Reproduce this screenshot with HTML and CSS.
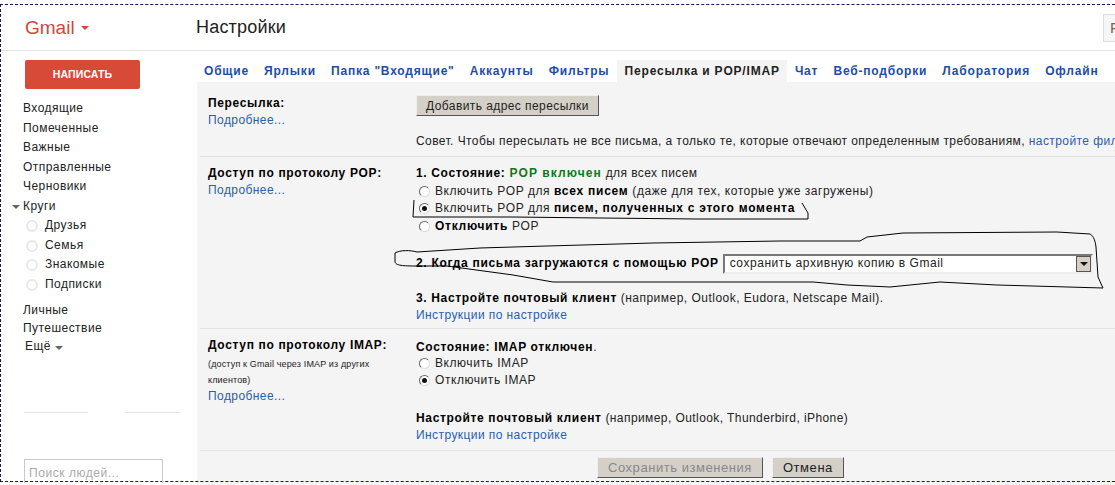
FILE: index.html
```html
<!DOCTYPE html>
<html lang="ru">
<head>
<meta charset="utf-8">
<title>Gmail — Настройки</title>
<link rel="stylesheet" href="styles.css">
</head>
<body>
<div class="frame">
  <header class="top">
    <div class="brand">Gmail <span class="caret caret-red"></span></div>
    <h1 class="title">Настройки</h1>
    <div class="search-stub">F</div>
  </header>
  <div class="body">
    <aside class="side">
      <div class="compose">НАПИСАТЬ</div>
      <nav class="nav">
        <div class="nav-item">Входящие</div>
        <div class="nav-item">Помеченные</div>
        <div class="nav-item">Важные</div>
        <div class="nav-item">Отправленные</div>
        <div class="nav-item">Черновики</div>
        <div class="nav-item nav-circles"><span class="caret caret-grey caret-left"></span>Круги</div>
        <div class="nav-item nav-sub"><span class="dot"></span>Друзья</div>
        <div class="nav-item nav-sub"><span class="dot"></span>Семья</div>
        <div class="nav-item nav-sub"><span class="dot"></span>Знакомые</div>
        <div class="nav-item nav-sub"><span class="dot"></span>Подписки</div>
        <div class="nav-item nav-gap">Личные</div>
        <div class="nav-item nav-tight">Путешествие</div>
        <div class="nav-item nav-more">Ещё <span class="caret caret-grey"></span></div>
      </nav>
      <div class="rules"><span class="rule"></span><span class="rule rule-short"></span></div>
      <div class="people">Поиск людей...</div>
    </aside>
    <main class="main">
      <div class="tabs">
        <a class="tab">Общие</a>
        <a class="tab">Ярлыки</a>
        <a class="tab">Папка "Входящие"</a>
        <a class="tab">Аккаунты</a>
        <a class="tab">Фильтры</a>
        <a class="tab tab-active">Пересылка и POP/IMAP</a>
        <a class="tab">Чат</a>
        <a class="tab">Веб-подборки</a>
        <a class="tab">Лаборатория</a>
        <a class="tab">Офлайн</a>
      </div>
      <div class="panel">
        <section class="row row-fwd">
          <div class="label"><b>Пересылка:</b><br><a class="link">Подробнее...</a></div>
          <div class="value">
            <button class="btn btn-add">Добавить адрес пересылки</button>
            <div class="tip">Совет. Чтобы пересылать не все письма, а только те, которые отвечают определенным требованиям, <a class="link">настройте фильтр</a></div>
          </div>
        </section>
        <section class="row row-pop">
          <div class="label"><b>Доступ по протоколу POP:</b><br><a class="link">Подробнее...</a></div>
          <div class="value">
            <div class="line"><b>1. Состояние: <span class="on">POP включен</span></b> для всех писем</div>
            <div class="line opt"><span class="radio"></span>Включить POP для <b>всех писем</b> (даже для тех, которые уже загружены)</div>
            <div class="line opt"><span class="radio radio-on"></span>Включить POP для <b>писем, полученных с этого момента</b></div>
            <div class="line opt"><span class="radio"></span><b>Отключить</b> POP</div>
            <div class="line when"><b>2. Когда письма загружаются с помощью POP</b>
              <span class="select"><span class="select-text">сохранить архивную копию в Gmail</span><span class="select-arrow"></span></span>
            </div>
            <div class="line client"><b>3. Настройте почтовый клиент</b> (например, Outlook, Eudora, Netscape Mail).</div>
            <div class="line"><a class="link">Инструкции по настройке</a></div>
          </div>
        </section>
        <section class="row row-imap">
          <div class="label"><b>Доступ по протоколу IMAP:</b>
            <div class="small">(доступ к Gmail через IMAP из других клиентов)</div>
            <a class="link">Подробнее...</a></div>
          <div class="value">
            <div class="line imap-state"><b>Состояние: IMAP отключен</b>.</div>
            <div class="line opt"><span class="radio"></span>Включить IMAP</div>
            <div class="line opt"><span class="radio radio-on"></span>Отключить IMAP</div>
            <div class="line client2"><b>Настройте почтовый клиент</b> (например, Outlook, Thunderbird, iPhone)</div>
            <div class="line"><a class="link">Инструкции по настройке</a></div>
          </div>
        </section>
        <div class="actions">
          <button class="btn btn-big btn-disabled">Сохранить изменения</button>
          <button class="btn btn-big">Отмена</button>
        </div>
      </div>
    </main>
  </div>
  <svg class="ink" width="1115" height="485" viewBox="0 0 1115 485" fill="none" stroke="#000" stroke-width="1">
    <path d="M414 200 L413 217 L513 217 L600 218 L697 219 L808 219 L808 213 L802 203"/>
    <path d="M1103 288 L1098 277 L1096 247 C1095 238 1092 235 1090 234 L1057 232 L903 233 L867 237 L860 241 L780 241 L653 243 L547 246 L480 248 L417 252 C410 250 400 250 395 253 L395 262 C396 265 400 266 415 266 L447 266 L513 275 L553 282 L780 282 L813 282 L847 285 L890 287 L940 282 L997 285 L1103 288"/>
  </svg>
</div>
</body>
</html>
```

FILE: styles.css
```css
* { box-sizing: border-box; }
html, body { margin: 0; padding: 0; background: #fff; }
body { font-family: "Liberation Sans", Arial, sans-serif; font-size: 12px; color: #222; }
.frame { position: relative; width: 1115px; height: 485px; overflow: hidden; background: #fff; padding-top: 5px; }
.frame::before { content: ""; position: absolute; left: 0; right: 0; top: 4px; bottom: 3px; border-top: 1px dashed #1a1a50; border-bottom: 1px dashed #1a1a50; border-left: 1px dashed #1a1a50; pointer-events: none; }
.top { height: 46px; display: flex; align-items: center; border-bottom: 1px solid #e5e5e5; padding-left: 25px; }
.brand { width: 171px; font-size: 19px; color: #d14836; display: flex; align-items: center; gap: 6px; }
.title { flex: 1; margin: 0; font-size: 18px; font-weight: 400; color: #222; letter-spacing: .2px; }
.search-stub { width: 12px; height: 28px; border: 1px solid #ddd; border-right: 0; background: #f6f6f6; color: #666; font-size: 15px; line-height: 26px; padding-left: 6px; flex: none; white-space: nowrap; }
.caret { display: inline-block; width: 0; height: 0; border: 4px solid transparent; border-top-color: #666; border-bottom: 0; }
.caret-red { border-top-color: #d14836; }
.caret-grey { border-top-color: #666; }
.caret-left { position: absolute; left: -11px; top: 8px; }
.body { display: flex; height: 430px; }
.side { width: 197px; padding: 9px 0 0 23px; position: relative; }
.compose { width: 115px; height: 29px; margin-left: 2px; background: #d84a38; color: #fff; border-radius: 2px; font-size: 10.5px; letter-spacing: .1px; font-weight: 700; text-align: center; line-height: 29px; }
.nav { margin-top: 10px; }
.nav-item { height: 19.5px; line-height: 19.5px; font-size: 12px; letter-spacing: .45px; color: #222; position: relative; }
.nav-sub { padding-left: 22px; display: flex; align-items: center; }
.dot { position: absolute; left: 3px; top: 4px; width: 12px; height: 12px; border-radius: 50%; border: 2px solid #e8e8e8; }
.nav-gap { margin-top: 6.5px; height: 18px; }
.nav-tight { height: 18px; }
.nav-more { padding-left: 2px; }
.rules { display: flex; gap: 37px; margin-top: 56px; margin-left: 1px; width: 158px; }
.rule { height: 1px; background: #e5e5e5; width: 64px; }
.rule-short { width: 56px; }
.people { width: 139px; height: 24px; margin-top: 46px; margin-left: 1px; border: 1px solid #c8c8c8; border-bottom: 0; padding: 6px 4px 0; color: #aaa; letter-spacing: .55px; white-space: nowrap; }
.main { flex: 1; min-width: 0; }
.tabs { display: flex; height: 22px; margin-top: 9px; font-weight: 700; font-size: 12px; letter-spacing: .8px; white-space: nowrap; }
.tab { padding: 4px 7.6px 0; color: #1c4ea6; }
.tab:first-child { padding-left: 7px; }
.tab-active { background: #f4f4f4; color: #222; }
.panel { background: #f4f4f4; height: 403px; letter-spacing: .42px; }
.link { color: #2a5db0; }
.row { display: flex; border-bottom: 1px solid #e3e3e3; margin-left: 3px; padding-left: 8px; white-space: nowrap; }
.label { width: 208px; line-height: 17px; flex: none; }
.label b, .line b { color: #000; letter-spacing: .65px; }
.row-fwd { height: 75px; padding-top: 13px; }
.row-pop { height: 172px; padding-top: 8px; }
.row-imap { height: 122px; padding-top: 8px; }
.btn { font: inherit; letter-spacing: inherit; height: 21px; padding: 0 9px; background: #d4d0c8; border: 1px solid; border-color: #eee #555 #555 #eee; color: #222; }
.btn-big { font-size: 13px; letter-spacing: .55px; padding: 0 10px; }
.btn-disabled { color: #888; }
.tip { margin-top: 17px; line-height: 17px; }
.line { line-height: 17.5px; }
.line .on { color: #0a7a1a; letter-spacing: 1.1px; }
.opt { display: flex; align-items: center; white-space: pre; padding-left: 3px; letter-spacing: .56px; }
.opt b { letter-spacing: .75px; }
.radio { width: 11px; height: 11px; border-radius: 50%; border: 1px solid; border-color: #666 #ddd #ddd #666; background: #fff; margin-right: 5px; flex: none; position: relative; }
.radio-on::after { content: ""; position: absolute; left: 2px; top: 2px; width: 5px; height: 5px; border-radius: 50%; background: #111; }
.when { display: flex; align-items: center; gap: 4px; margin-top: 18px; height: 21px; letter-spacing: .55px; }
.when b { letter-spacing: .7px; }
.client { margin-top: 17px; line-height: 15.5px; letter-spacing: .48px; }
.client2 { margin-top: 20px; letter-spacing: .42px; }
.imap-state { height: 17.5px; line-height: 21.5px; }
.select { display: flex; width: 370px; height: 20px; background: #fff; border: 2px solid; border-color: #777 #eee #eee #777; align-items: center; justify-content: space-between; padding: 0 0 0 5px; }
.select-arrow { width: 15px; height: 16px; background: #d4d0c8; border: 1px solid #555; position: relative; }
.select-arrow::after { content: ""; position: absolute; left: 3px; top: 5px; border: 4px solid transparent; border-top-color: #111; border-bottom: 0; }
.small { font-size: 9px; line-height: 16px; white-space: normal; width: 175px; margin-top: 2px; color: #222; letter-spacing: .15px; }
.actions { display: flex; gap: 9px; padding: 6px 0 0 400px; }
.ink { position: absolute; left: 0; top: 0; pointer-events: none; }
```
